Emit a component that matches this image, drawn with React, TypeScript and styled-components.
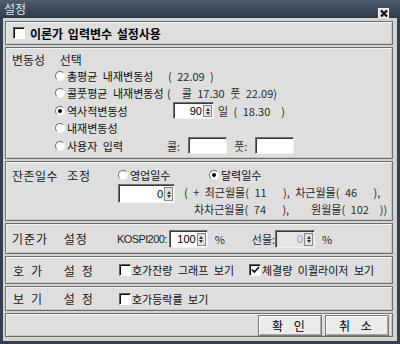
import React from "react";
import styled, { createGlobalStyle } from "styled-components";

const GlobalStyle = createGlobalStyle`
  html, body {
    margin: 0;
    padding: 0;
    background: #ffffff;
  }
  body {
    font-family: "Noto Sans CJK KR", "Noto Sans", sans-serif;
    font-size: 11px;
    color: #111;
  }
`;

const Window = styled.div`
  width: 400px;
  height: 344px;
  box-sizing: border-box;
  display: flex;
  flex-direction: column;
  background: #34404d;
`;

const TitleBar = styled.div`
  height: 18px;
  flex: none;
  display: flex;
  align-items: flex-start;
  justify-content: space-between;
  padding: 0 11px 0 4px;
  background: linear-gradient(#4f5f70, #3a4857 60%, #2f3b48);
`;

const Title = styled.span`
  color: #dfe4ea;
  font-size: 12px;
  line-height: 18px;
`;

const CloseButton = styled.div`
  margin-top: 8px;
  width: 11px;
  height: 10px;
  background: #dcdcdc;
  border: 1px solid #f2f2f2;
  box-sizing: border-box;
  display: flex;
  align-items: center;
  justify-content: center;
`;

const Body = styled.div`
  flex: 1;
  margin: 0 3px 3px 3px;
  padding: 3px 4px 4px 2px;
  background: #d2d2d2;
  display: flex;
  flex-direction: column;
  gap: 2px;
`;

const Panel = styled.div<{ $h: number; $pad?: string }>`
  height: ${(p) => p.$h}px;
  flex: none;
  box-sizing: border-box;
  background: #dedede;
  border: 1px solid #6e6e6e;
  box-shadow: inset 1px 1px 0 #f6f6f6, inset -1px -1px 0 #c4c4c4;
  padding: ${(p) => p.$pad || "0 6px"};
  display: flex;
`;

const Row = styled.div<{ $h?: number }>`
  display: flex;
  align-items: center;
  height: ${(p) => (p.$h ? `${p.$h}px` : "auto")};
  white-space: pre;
`;

const Column = styled.div`
  display: flex;
  flex-direction: column;
`;

const SectionLabel = styled.div<{ $ls: number; $ws: number; $w?: number }>`
  font-size: 12px;
  color: #1a1a1a;
  white-space: pre;
  letter-spacing: ${(p) => p.$ls}px;
  word-spacing: ${(p) => p.$ws}px;
  width: ${(p) => (p.$w ? `${p.$w}px` : "auto")};
  flex: none;
`;

const BoldText = styled.span`
  font-size: 12px;
  font-weight: bold;
  color: #000;
  margin-left: 4px;
  word-spacing: 2px;
`;

const Text = styled.span<{ $w?: number; $ml?: number; $muted?: boolean }>`
  display: inline-block;
  white-space: pre;
  word-spacing: 3px;
  width: ${(p) => (p.$w ? `${p.$w}px` : "auto")};
  margin-left: ${(p) => p.$ml || 0}px;
  color: ${(p) => (p.$muted ? "#2a2a2a" : "#111")};
  flex: none;
`;

const Mono = styled.span`
  font-family: "Liberation Sans", sans-serif;
  font-size: 11px;
  letter-spacing: -0.6px;
  color: #222;
  margin-right: 2px;
`;

const RadioDot = styled.span<{ $on?: boolean }>`
  position: relative;
  width: 10px;
  height: 10px;
  box-sizing: border-box;
  border-radius: 50%;
  border: 1px solid;
  border-color: #6e6e6e #f4f4f4 #f4f4f4 #6e6e6e;
  background: #fff;
  flex: none;
  margin-right: 2px;

  &::after {
    content: "";
    display: ${(p) => (p.$on ? "block" : "none")};
    position: absolute;
    left: 2px;
    top: 2px;
    width: 4px;
    height: 4px;
    border-radius: 50%;
    background: #000;
  }
`;

const CheckBox = styled.span`
  width: 12px;
  height: 12px;
  box-sizing: border-box;
  border: 1px solid;
  border-color: #606060 #ffffff #ffffff #606060;
  box-shadow: inset 1px 1px 0 #101010;
  background: #fff;
  flex: none;
  display: flex;
  align-items: center;
  justify-content: center;
  margin-right: 1px;
`;

const Field = styled.div<{ $w: number; $h: number; $off?: boolean }>`
  width: ${(p) => p.$w}px;
  height: ${(p) => p.$h}px;
  box-sizing: border-box;
  border: 1px solid;
  border-color: #6e6e6e #f2f2f2 #f2f2f2 #6e6e6e;
  box-shadow: inset 1px 1px 0 #3a3a3a;
  background: ${(p) => (p.$off ? "#e4e4e4" : "#fff")};
  display: flex;
  align-items: stretch;
  flex: none;
`;

const FieldValue = styled.span<{ $off?: boolean }>`
  flex: 1;
  padding-right: 1px;
  font-family: "Liberation Sans", sans-serif;
  font-size: 11px;
  display: flex;
  align-items: center;
  justify-content: flex-end;
  color: ${(p) => (p.$off ? "#9a9a9a" : "#000")};
`;

const SpinButtons = styled.span`
  width: 9px;
  margin: 2px 1px 1px 0;
  box-sizing: border-box;
  background: #e2e2e2;
  border: 1px solid #8a8a8a;
  display: flex;
  flex-direction: column;
  align-items: center;
  justify-content: center;
  gap: 1px;
`;

const Arrow = styled.span<{ $down?: boolean }>`
  width: 0;
  height: 0;
  border-left: 2.5px solid transparent;
  border-right: 2.5px solid transparent;
  ${(p) =>
    p.$down ? "border-top: 3px solid #333;" : "border-bottom: 3px solid #333;"}
`;

const ButtonRow = styled.div`
  flex: 1;
  display: flex;
  justify-content: flex-end;
  align-items: center;
  gap: 3px;
`;

const PushButton = styled.button`
  width: 64px;
  height: 21px;
  padding: 0;
  font-family: "Noto Sans CJK KR", sans-serif;
  font-size: 12px;
  letter-spacing: 3px;
  word-spacing: 2px;
  color: #000;
  background: #ebebeb;
  border: 1px solid #7a7a7a;
  box-shadow: inset 1px 1px 0 #ffffff, inset -1px -1px 0 #a8a8a8;
`;

const Radio: React.FC<{ on?: boolean; children: React.ReactNode; w?: number }> = ({
  on,
  children,
  w,
}) => (
  <>
    <RadioDot $on={on} />
    <Text $w={w}>{children}</Text>
  </>
);

const Check: React.FC<{ on?: boolean }> = ({ on }) => (
  <CheckBox>
    {on && (
      <svg width="9" height="8" viewBox="0 0 9 8">
        <path d="M1 3.5 L3.3 6 L8 1" stroke="#000" strokeWidth="1.6" fill="none" />
      </svg>
    )}
  </CheckBox>
);

const Spin: React.FC<{ w: number; h: number; value: string; off?: boolean }> = ({
  w,
  h,
  value,
  off,
}) => (
  <Field $w={w} $h={h} $off={off}>
    <FieldValue $off={off}>{value}</FieldValue>
    <SpinButtons>
      <Arrow />
      <Arrow $down />
    </SpinButtons>
  </Field>
);

export default function App() {
  return (
    <Window>
      <GlobalStyle />
      <TitleBar>
        <Title>설정</Title>
        <CloseButton>
          <svg width="8" height="7" viewBox="0 0 8 7">
            <path d="M1 0.5 L7 6.5 M7 0.5 L1 6.5" stroke="#000" strokeWidth="2" />
          </svg>
        </CloseButton>
      </TitleBar>
      <Body>
        <Panel $h={24} $pad="0 7px">
          <Row>
            <Check />
            <BoldText>이론가 입력변수 설정사용</BoldText>
          </Row>
        </Panel>

        <Panel $h={112} $pad="3px 6px">
          <Column>
            <Row $h={16}>
              <SectionLabel $ls={0} $ws={12}>변동성 선택</SectionLabel>
            </Row>
            <Column style={{ marginLeft: 43 }}>
              <Row $h={17.5}>
                <Radio w={101}>총평균 내재변동성</Radio>
                <Text $muted>( 22.09 )</Text>
              </Row>
              <Row $h={17.5}>
                <Radio w={100}>콜풋평균 내재변동성</Radio>
                <Text $muted>(  콜 17.30 풋 22.09)</Text>
              </Row>
              <Row $h={17.5}>
                <Radio on w={106}>역사적변동성</Radio>
                <Spin w={41} h={17} value="90" />
                <Text $ml={4} $muted>일 ( 18.30  )</Text>
              </Row>
              <Row $h={17.5}>
                <Radio>내재변동성</Radio>
              </Row>
              <Row $h={17.5}>
                <Radio w={100}>사용자 입력</Radio>
                <Text $muted>콜:</Text>
                <Field $w={39} $h={17} style={{ marginLeft: 8 }} />
                <Text $ml={7} $muted>풋:</Text>
                <Field $w={39} $h={17} style={{ marginLeft: 8 }} />
              </Row>
            </Column>
          </Column>
        </Panel>

        <Panel $h={60} $pad="5px 6px">
          <SectionLabel $ls={0.5} $ws={6} $w={106} style={{ lineHeight: "18px" }}>
            잔존일수 조정
          </SectionLabel>
          <Column>
            <Row $h={18}>
              <Radio w={79}>영업일수</Radio>
              <Radio on>달력일수</Radio>
            </Row>
            <Row style={{ alignItems: "flex-start", marginTop: 1 }}>
              <Spin w={57} h={19} value="0" />
              <Column style={{ marginLeft: 9, lineHeight: "17px" }}>
                <Text $muted>( + 최근월물( 11   ), 차근월물( 46   ),</Text>
                <Text $muted $ml={10}>차차근월물( 74   ),    원월물( 102  ))</Text>
              </Column>
            </Row>
          </Column>
        </Panel>

        <Panel $h={31}>
          <Row>
            <SectionLabel $ls={1} $ws={12} $w={105}>기준가 설정</SectionLabel>
            <Mono>KOSPI200:</Mono>
            <Spin w={39} h={18} value="100" />
            <Text $ml={7} $muted>%</Text>
            <Text $ml={27} $muted>선물:</Text>
            <Spin w={40} h={18} value="0" off />
            <Text $ml={7} $muted>%</Text>
          </Row>
        </Panel>

        <Panel $h={28}>
          <Row>
            <SectionLabel $ls={7} $ws={5} $w={106} style={{ marginLeft: 1 }}>
              호가 설정
            </SectionLabel>
            <Check />
            <Text $w={117}>호가잔량 그래프 보기</Text>
            <Check on />
            <Text>체결량 이퀄라이저 보기</Text>
          </Row>
        </Panel>

        <Panel $h={25}>
          <Row>
            <SectionLabel $ls={7} $ws={5} $w={106} style={{ marginLeft: 1 }}>
              보기 설정
            </SectionLabel>
            <Check />
            <Text>호가등락률 보기</Text>
          </Row>
        </Panel>

        <Panel $h={24} $pad="0 3px 0 0">
          <ButtonRow>
            <PushButton>확 인</PushButton>
            <PushButton>취 소</PushButton>
          </ButtonRow>
        </Panel>
      </Body>
    </Window>
  );
}
